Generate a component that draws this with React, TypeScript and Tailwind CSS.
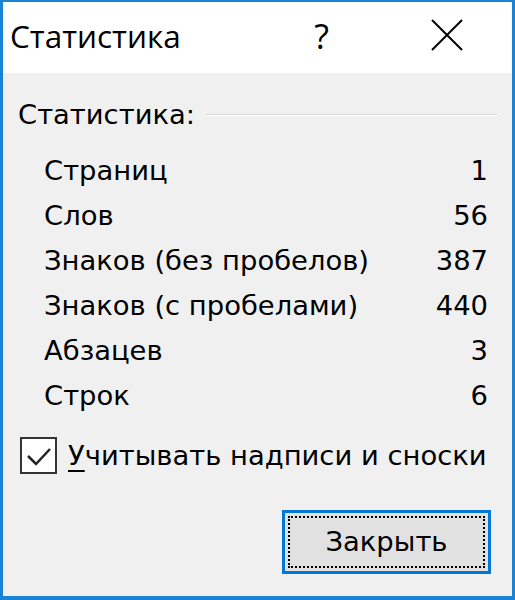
// Word "Statistics" dialog, Windows 10 style

const rows: [string, string][] = [
  ['Страниц', '1'],
  ['Слов', '56'],
  ['Знаков (без пробелов)', '387'],
  ['Знаков (с пробелами)', '440'],
  ['Абзацев', '3'],
  ['Строк', '6'],
];

const dlgFont = "font-['DejaVu_Sans',sans-serif]";

export default function App() {
  return (
    <div className="w-[515px] h-[600px] flex flex-col border-x-[3px] border-t-2 border-b-[4px] border-[#1883d7] bg-white">
      {/* title bar */}
      <div className="h-[71px] flex items-center bg-white pl-[7px]">
        <span className="font-['Open_Sans',sans-serif] text-[31.5px] text-black leading-none pb-[4px]">
          Статистика
        </span>
        <span className="ml-auto mr-[102px] font-['Open_Sans',sans-serif] text-[34px] text-black leading-none pb-[4px]">?</span>
        <svg width="32" height="32" viewBox="0 0 32 32" className="mr-[49px] mb-[6px]">
          <path d="M1 1 L31 31 M31 1 L1 31" stroke="#000" strokeWidth="2" />
        </svg>
      </div>

      {/* body */}
      <div className={`flex-1 bg-[#f0f0f0] flex flex-col pl-[15px] pr-[20px] ${dlgFont} text-black`}>
        <div className="flex items-center h-[44px] mt-[20px]">
          <span className="text-[27.4px] leading-none">Статистика:</span>
          <div className="flex-1 ml-[11px] mr-[-5px] flex flex-col">
            <div className="h-px bg-[#d5d5d5]" />
            <div className="h-px bg-white" />
          </div>
        </div>

        <div className="flex flex-col mt-[11px] pl-[26px] pr-[4px]">
          {rows.map(([label, value]) => (
            <div key={label} className="flex items-center justify-between h-[45px] text-[27.4px] leading-none">
              <span>{label}</span>
              <span>{value}</span>
            </div>
          ))}
        </div>

        <label className="flex items-center mt-[19px] ml-[2px] text-[27.4px] leading-none">
          <span className="w-[37px] h-[37px] border-2 border-[#333] bg-white flex items-center justify-center shrink-0">
            <svg width="30" height="30" viewBox="0 0 30 30">
              <path d="M4 15 L12 23 L26 8" stroke="#222" strokeWidth="2.5" fill="none" />
            </svg>
          </span>
          <span className="ml-[11px]">
            <span className="underline underline-offset-[5px]">У</span>читывать надписи и сноски
          </span>
        </label>

        <div className="flex justify-end mt-[36px] mr-[1px]">
          <button className="w-[209px] h-[64px] border-[3px] border-[#0078d7] bg-[#e1e1e1] p-[3px]">
            <span className="w-full h-full flex items-center justify-center border-2 border-dotted border-black text-[27.4px] leading-none">
              Закрыть
            </span>
          </button>
        </div>
      </div>
    </div>
  );
}
